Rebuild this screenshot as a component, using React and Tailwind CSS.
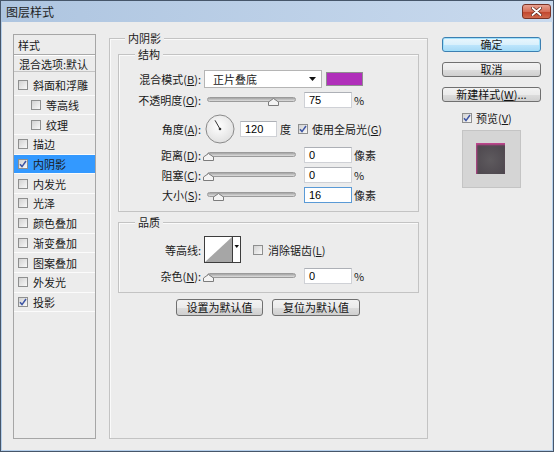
import React from 'react';

const btn =
  "flex items-center justify-center rounded-[3px] border border-[#707070] bg-[linear-gradient(to_bottom,#f2f2f2_0%,#ebebeb_50%,#dddddd_51%,#cfcfcf_100%)] text-[11px] leading-none text-[#111]";

const items = [
  { label: '斜面和浮雕' },
  { label: '等高线', indent: true },
  { label: '纹理', indent: true },
  { label: '描边' },
  { label: '内阴影', checked: true, active: true },
  { label: '内发光' },
  { label: '光泽' },
  { label: '颜色叠加' },
  { label: '渐变叠加' },
  { label: '图案叠加' },
  { label: '外发光' },
  { label: '投影', checked: true },
];

function Check({ checked }) {
  return (
    <span className="flex h-[10px] w-[10px] shrink-0 items-center justify-center border border-[#8e8f8f] bg-[linear-gradient(135deg,#d2d2d2,#f8f8f8)]">
      {checked && (
        <svg width="8" height="8" viewBox="0 0 8 8">
          <path d="M1 4.2 L3 6.6 L7 1" fill="none" stroke="#3c54a4" strokeWidth="1.5" />
        </svg>
      )}
    </span>
  );
}

const U = ({ c }) => <span className="underline underline-offset-1">{c}</span>;

function Label({ children }) {
  return <span className="w-[82px] shrink-0 text-right">{children}</span>;
}

function Slider({ thumb }) {
  return (
    <div className="relative h-[16px] w-[97px] shrink-0">
      <div className="absolute left-[4px] right-[4px] top-[5px] h-[5px] rounded-full border border-[#9b9b9b] bg-[linear-gradient(to_bottom,#a4a4a4,#dedede)]" />
      <svg className={`absolute top-[6px] ${thumb}`} width="11" height="8" viewBox="0 0 11 8">
        <path d="M0.5 7.5 V4 L5.5 0.5 L10.5 4 V7.5 Z" fill="#f4f4f4" stroke="#7c7c7c" />
      </svg>
    </div>
  );
}

function Field({ value, w = 'w-[48px]', focus }) {
  return (
    <div
      className={`flex h-[16px] ${w} shrink-0 items-center border bg-white pl-[4px] font-['Liberation_Sans',sans-serif] text-[11px] text-black ${
        focus ? 'border-[#5a9ad6]' : 'border-[#cfd1d6] border-t-[#adb0b6]'
      }`}
    >
      {value}
    </div>
  );
}

function Group({ title, className, legend = 'left-[16px]', children }) {
  return (
    <div className={`relative border border-[#c3c3c3] shadow-[inset_1px_1px_0_#fafafa] ${className}`}>
      <span className={`absolute top-[-8px] bg-[#ececec] px-[3px] leading-[14px] ${legend}`}>{title}</span>
      {children}
    </div>
  );
}

function SliderRow({ label, thumb, value, unit, focus, className }) {
  return (
    <div className={`flex h-[16px] items-center ${className}`}>
      <Label>{label}</Label>
      <div className="ml-[2px]">
        <Slider thumb={thumb} />
      </div>
      <div className="ml-[4px]">
        <Field value={value} focus={focus} />
      </div>
      <span className="ml-[2px]">{unit}</span>
    </div>
  );
}

export default function App() {
  return (
    <div className="flex h-[452px] w-[554px] flex-col border border-[#46566a] font-['Noto_Sans_CJK_SC',sans-serif] text-[11px] leading-[14px] text-[#1a1a1a]">
      {/* title bar */}
      <div className="flex h-[21px] shrink-0 items-start bg-[linear-gradient(to_right,#aec5e0,#c9daee)]">
        <span className="ml-[5px] mt-[4px] text-[12px] leading-[14px] text-[#1e1e1e]">图层样式</span>
        <div className="ml-auto mr-[2px] mt-[3px] flex h-[15px] w-[29px] items-center justify-center rounded-[3px] border border-[#7a3326] bg-[linear-gradient(to_bottom,#e7a191_0%,#d56f59_50%,#c1432a_51%,#cf6a4e_100%)]">
          <svg width="11" height="9" viewBox="0 0 11 9">
            <path d="M1.5 1 L9.5 8 M9.5 1 L1.5 8" stroke="#5a2318" strokeWidth="3.2" strokeLinecap="round" />
            <path d="M1.5 1 L9.5 8 M9.5 1 L1.5 8" stroke="#ffffff" strokeWidth="1.8" strokeLinecap="round" />
          </svg>
        </div>
      </div>

      {/* client */}
      <div className="flex flex-1 items-start border-x border-b border-[#b5cfeb] bg-[#ececec] pl-[11px] pt-[12px]">
        {/* left list */}
        <div className="h-[405px] w-[83px] shrink-0 overflow-hidden border border-[#a6a6a6]">
          <div className="flex h-[20px] items-center border-b border-[#a9a9a9] pl-[4px] shadow-[0_1px_0_#fff]">样式</div>
          <div className="flex h-[17px] items-center overflow-hidden whitespace-nowrap border-b border-[#c4c4c4] pl-[5px] pt-px">混合选项:默认</div>
          <div className="pt-[4px]">
            {items.map((it) => (
              <div
                key={it.label}
                className={`flex h-[19.7px] items-center border-b border-[#fbfbfb] ${it.indent ? 'pl-[17px]' : 'pl-[4px]'} ${
                  it.active ? 'bg-[#3399ff]' : ''
                }`}
              >
                <Check checked={it.checked} />
                <span className="ml-[5px]">{it.label}</span>
              </div>
            ))}
          </div>
        </div>

        {/* middle */}
        <Group title="内阴影" legend="left-[15px]" className="ml-[13px] mt-[4px] h-[401px] w-[319px] shrink-0">
          <Group title="结构" className="mx-[8px] mt-[15px] h-[158px]">
            <div className="mt-[15px] flex h-[18px] items-center">
              <Label>
                混合模式(<U c="B" />):
              </Label>
              <div className="ml-[3px] flex h-[18px] w-[118px] items-center border border-[#b5b5b5] bg-white pl-[8px] pr-[5px]">
                <span>正片叠底</span>
                <svg className="ml-auto" width="7" height="4" viewBox="0 0 7 4">
                  <path d="M0 0 H7 L3.5 4 Z" fill="#111" />
                </svg>
              </div>
              <div className="ml-[4px] h-[14px] w-[37px] border border-[#8f8f8f] bg-[#b02fba]" />
            </div>

            <SliderRow
              className="mt-[4px]"
              label={
                <>
                  不透明度(<U c="O" />):
                </>
              }
              thumb="left-[65px]"
              value="75"
              unit="%"
            />

            <div className="mt-[6px] flex h-[30px] items-center">
              <Label>
                角度(<U c="A" />):
              </Label>
              <svg className="ml-[4px] shrink-0" width="30" height="30" viewBox="0 0 30 30">
                <defs>
                  <radialGradient id="dial" cx="0.45" cy="0.4" r="0.7">
                    <stop offset="0" stopColor="#ffffff" />
                    <stop offset="1" stopColor="#dcdcdc" />
                  </radialGradient>
                </defs>
                <circle cx="15" cy="15" r="14" fill="url(#dial)" stroke="#8a8a8a" />
                <line x1="15" y1="15" x2="10" y2="6.3" stroke="#333" strokeWidth="1" />
                <circle cx="15" cy="15" r="1.3" fill="#333" />
              </svg>
              <div className="ml-[5px]">
                <Field value="120" w="w-[37px]" />
              </div>
              <span className="ml-[3px]">度</span>
              <div className="ml-[7px]">
                <Check checked />
              </div>
              <span className="ml-[4px] whitespace-nowrap">
                使用全局光(<U c="G" />)
              </span>
            </div>

            <SliderRow
              className="mt-[3px]"
              label={
                <>
                  距离(<U c="D" />):
                </>
              }
              thumb="left-[0px]"
              value="0"
              unit="像素"
            />
            <SliderRow
              className="mt-[4px]"
              label={
                <>
                  阻塞(<U c="C" />):
                </>
              }
              thumb="left-[0px]"
              value="0"
              unit="%"
            />
            <SliderRow
              className="mt-[4px]"
              label={
                <>
                  大小(<U c="S" />):
                </>
              }
              thumb="left-[10px]"
              value="16"
              unit="像素"
              focus
            />
          </Group>

          <Group title="品质" className="mx-[8px] mt-[10px] h-[71px]">
            <div className="mt-[13px] flex h-[27px] items-center">
              <Label>等高线:</Label>
              <svg className="ml-[3px] shrink-0" width="37" height="27" viewBox="0 0 37 27">
                <rect x="0.5" y="0.5" width="36" height="26" fill="#ffffff" stroke="#3d3d3d" />
                <path d="M1 26 L28 1 V26 Z" fill="#a6a6a6" />
                <line x1="28.5" y1="1" x2="28.5" y2="26" stroke="#3d3d3d" />
                <path d="M30.5 9 H35 L32.75 12 Z" fill="#111" />
              </svg>
              <div className="ml-[12px]">
                <Check />
              </div>
              <span className="ml-[5px] whitespace-nowrap">
                消除锯齿(<U c="L" />)
              </span>
            </div>
            <SliderRow
              className="mt-[5px]"
              label={
                <>
                  杂色(<U c="N" />):
                </>
              }
              thumb="left-[0px]"
              value="0"
              unit="%"
            />
          </Group>

          <div className="mt-[6px] flex">
            <div className={`${btn} ml-[66px] h-[17px] w-[87px]`}>设置为默认值</div>
            <div className={`${btn} ml-[9px] h-[17px] w-[88px]`}>复位为默认值</div>
          </div>
        </Group>

        {/* right column */}
        <div className="ml-[14px] mt-[3px] flex w-[99px] shrink-0 flex-col">
          <div className="flex h-[15px] items-center justify-center rounded-[3px] border border-[#3c7fb1] bg-[linear-gradient(to_bottom,#eaf6fd_0%,#d9f0fc_50%,#bee6fd_51%,#a7d9f5_100%)] text-[11px] leading-none shadow-[inset_0_0_0_1px_#9fe0fb]">
            确定
          </div>
          <div className={`${btn} mt-[10px] h-[15px]`}>取消</div>
          <div className={`${btn} mt-[10px] h-[15px] whitespace-nowrap`}>
            新建样式(<U c="W" />)...
          </div>
          <div className="ml-[20px] mt-[10px] flex h-[11px] items-center">
            <Check checked />
            <span className="ml-[4px] whitespace-nowrap">
              预览(<U c="V" />)
            </span>
          </div>
          <div className="ml-[20px] mt-[7px] flex h-[58px] w-[59px] items-start border border-[#c4c4c4] bg-[#d5d5d5] pl-[13px] pt-[12px]">
            <div className="h-[31px] w-[29px] bg-[radial-gradient(circle_at_50%_55%,#5e5a5e,#4a444b)] shadow-[inset_1px_2px_2px_#c2458f]" />
          </div>
        </div>
      </div>
    </div>
  );
}
